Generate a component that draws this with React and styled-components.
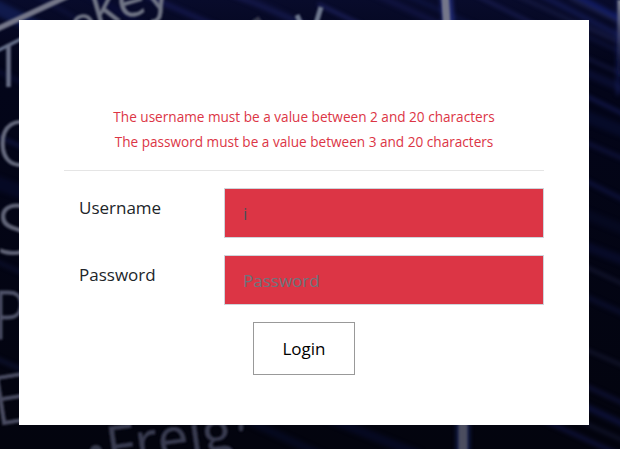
import React from 'react';
import styled, { createGlobalStyle } from 'styled-components';

const GlobalStyle = createGlobalStyle`
  *, *::before, *::after { box-sizing: border-box; }
  body {
    margin: 0;
    background: #03040f;
    color: #212529;
    font-family: "Open Sans", "Noto Sans", sans-serif;
    font-size: 17px;
    overflow: hidden;
  }
`;

const Page = styled.main`
  position: relative;
  height: 449px;
  padding: 20px 31px 24px 19px;
  overflow: hidden;
`;

const Backdrop = styled.svg`
  position: absolute;
  inset: 0;
  width: 100%;
  height: 100%;
  font-family: "Open Sans", sans-serif;
`;

const Card = styled.section`
  position: relative;
  height: 405px;
  padding: 84px 45px 0;
  background: #fff;
`;

const Errors = styled.div`
  color: #dc3545;
  font-size: 13.6px;
  line-height: 25px;
  text-align: center;
`;

const ErrorLine = styled.p`
  margin: 0;
`;

const Divider = styled.hr`
  margin: 16px 0 17px;
  border: 0;
  border-top: 1px solid #e5e5e5;
`;

const Form = styled.form`
  display: flex;
  flex-direction: column;
  gap: 17px;
`;

const Field = styled.div`
  display: grid;
  grid-template-columns: 160px 1fr;
`;

const Label = styled.label`
  padding: 7px 15px;
  line-height: 26px;
`;

const Input = styled.input`
  width: 100%;
  height: 50px;
  padding: 2px 18px;
  border: 1px solid #ced4da;
  border-radius: 0;
  outline: 0;
  background: #dc3545;
  color: #495057;
  font: inherit;

  &::placeholder {
    color: #6c757d;
    opacity: 1;
  }
`;

const LoginButton = styled.button`
  align-self: center;
  width: 102px;
  height: 53px;
  padding: 0;
  border: 1px solid #999;
  border-radius: 0;
  background: #fff;
  color: #000;
  font: inherit;
`;

const streaks = [
  [-10, 4, 50, 34, 14, '#14225c', 0.7],
  [35, -5, 120, 43, 3, '#15194b', 0.6],
  [85, -8, 190, 52, 8, '#090d35', 0.9],
  [145, -5, 260, 45, 5, '#171b55', 0.75],
  [195, -20, 305, 24, 3, '#2b2f80', 0.8],
  [235, -8, 330, 38, 8, '#10143f', 0.7],
  [318, 4, 362, 25, 2, '#30358b', 0.8],
  [355, -15, 470, 38, 6, '#15184a', 0.65],
  [395, -10, 480, 28, 4, '#111749', 0.7],
  [465, -10, 550, 32, 2, '#303683', 0.65],
  [500, -12, 620, 43, 2, '#30366f', 0.55],
  [535, -8, 640, 46, 5, '#17205e', 0.65],
  [565, -10, 650, 34, 5, '#18278a', 0.6],
  [570, -2, 640, 32, 2, '#545c9d', 0.4],
  [580, 22, 640, 49, 3, '#10143a', 0.9],
  [580, 33, 640, 61, 3, '#151a4a', 0.7],
  [580, 55, 640, 82, 2, '#272d6b', 0.6],
  [580, 70, 640, 96, 8, '#0c1035', 0.8],
  [580, 93, 640, 122, 3, '#202b7d', 0.6],
  [580, 114, 640, 138, 12, '#080d2d', 0.8],
  [580, 140, 640, 166, 4, '#171b52', 0.6],
  [580, 178, 640, 208, 4, '#161c58', 0.6],
  [580, 212, 640, 236, 10, '#070a24', 0.8],
  [580, 244, 640, 267, 9, '#090d2d', 0.8],
  [580, 264, 640, 292, 1.8, '#30345f', 0.7],
  [580, 294, 640, 321, 5, '#0e1236', 0.7],
  [580, 347, 640, 373, 1.8, '#30345f', 0.7],
  [560, 374, 640, 411, 4, '#141845', 0.7],
  [540, 385, 640, 432, 6, '#0e133f', 0.8],
  [510, 405, 640, 464, 4, '#14184c', 0.7],
  [560, 412, 640, 448, 2, '#252a55', 0.6],
  [-5, 70, 60, 100, 4, '#0c1038', 0.7],
  [-5, 135, 60, 164, 3, '#1a2057', 0.75],
  [-5, 182, 60, 206, 14, '#080c2b', 0.7],
  [-5, 261, 60, 289, 4, '#11163a', 0.6],
  [-5, 358, 60, 386, 4, '#151b42', 0.6],
  [240, 417, 330, 459, 8, '#070b23', 0.8],
  [320, 415, 420, 455, 9, '#070b26', 0.8],
];

function CodeWall() {
  return (
    <Backdrop viewBox="0 0 620 449" aria-hidden="true">
      <defs>
        <linearGradient id="night" x1="0" y1="0" x2="0" y2="1">
          <stop stopColor="#080b2b" />
          <stop offset="0.14" stopColor="#03051a" />
          <stop offset="1" stopColor="#03040e" />
        </linearGradient>
        <filter id="soft" filterUnits="userSpaceOnUse" x="-20" y="-20" width="660" height="490">
          <feGaussianBlur stdDeviation="0.9" />
        </filter>
        <filter id="glow" filterUnits="userSpaceOnUse" x="-20" y="-20" width="660" height="490" colorInterpolationFilters="sRGB">
          <feGaussianBlur stdDeviation="1.9" />
        </filter>
        <linearGradient id="edge" x1="0" y1="0" x2="0" y2="1">
          <stop stopColor="#858998" />
          <stop offset="1" stopColor="#151b50" stopOpacity="0" />
        </linearGradient>
      </defs>
      <rect width="620" height="449" fill="url(#night)" />
      <g filter="url(#glow)">
        {streaks.map(([x1, y1, x2, y2, width, color, opacity]) => (
          <line key={`${x1}-${y1}`} x1={x1} y1={y1} x2={x2} y2={y2} stroke={color} strokeWidth={width} opacity={opacity} />
        ))}
        <path d="M446-5 449 28" stroke="#202a73" strokeWidth="12" />
        <path d="M463 415v40" stroke="#111b48" strokeWidth="14" />
        <path d="M618-5v100" stroke="#1b2570" strokeWidth="4" opacity="0.45" />
      </g>
      <g filter="url(#soft)">
        <path d="M-5 30 68-4" stroke="#747789" strokeWidth="5.5" />
        <path d="M-5 52 23 38" stroke="#66708a" strokeWidth="3.5" />
        <path d="M445-5 447 28" stroke="#74778a" strokeWidth="7.5" />
        <path d="M463 415v40" stroke="#4b4d5e" strokeWidth="9" />
        <rect x="617.5" width="5" height="85" fill="url(#edge)" />
        <g fill="#707485" stroke="#707485" strokeWidth="0.5" fontSize="44">
          <text x="96" y="27" fontSize="50" transform="rotate(-16 96 27)">key</text>
          <text x="73" y="41" transform="rotate(-12 73 41)">o</text>
        </g>
        <path d="M8.5 44v43" stroke="#697087" strokeWidth="4.5" />
        <g fontWeight="300" strokeWidth="0.9">
          <text x="-3" y="166" fontSize="63" fill="#666a7e" stroke="#666a7e">O</text>
          <text x="-3" y="254" fontSize="69" fill="#606477" stroke="#606477">S</text>
          <text x="-6" y="339" fontSize="67" fill="#505369" stroke="#505369" textLength="31" lengthAdjust="spacingAndGlyphs">P</text>
          <text x="-4" y="425" fontSize="68" fill="#484b60" stroke="#484b60" transform="rotate(-9 0 425)">E</text>
        </g>
        <text x="109" y="467" fontSize="56" fill="#383b50" stroke="#383b50" strokeWidth="0.4" textLength="127" lengthAdjust="spacingAndGlyphs" transform="rotate(-8 109 467)">Freig</text>
        <ellipse cx="96" cy="450" rx="6" ry="5" fill="#35384a" />
        <ellipse cx="241" cy="427" rx="2.5" ry="4.5" fill="#303449" />
        <path d="m297 15 5 12m13 0 6-20" fill="none" stroke="#707990" strokeWidth="5" />
        <path d="m253 22 5-3 3 4" fill="none" stroke="#35394d" strokeWidth="4" />
      </g>
    </Backdrop>
  );
}

export default function App() {
  return (
    <Page>
      <GlobalStyle />
      <CodeWall />
      <Card>
        <Errors>
          <ErrorLine>The username must be a value between 2 and 20 characters</ErrorLine>
          <ErrorLine>The password must be a value between 3 and 20 characters</ErrorLine>
        </Errors>
        <Divider />
        <Form onSubmit={(event) => event.preventDefault()}>
          <Field>
            <Label htmlFor="username">Username</Label>
            <Input id="username" defaultValue="i" />
          </Field>
          <Field>
            <Label htmlFor="password">Password</Label>
            <Input id="password" type="password" placeholder="Password" />
          </Field>
          <LoginButton type="submit">Login</LoginButton>
        </Form>
      </Card>
    </Page>
  );
}
